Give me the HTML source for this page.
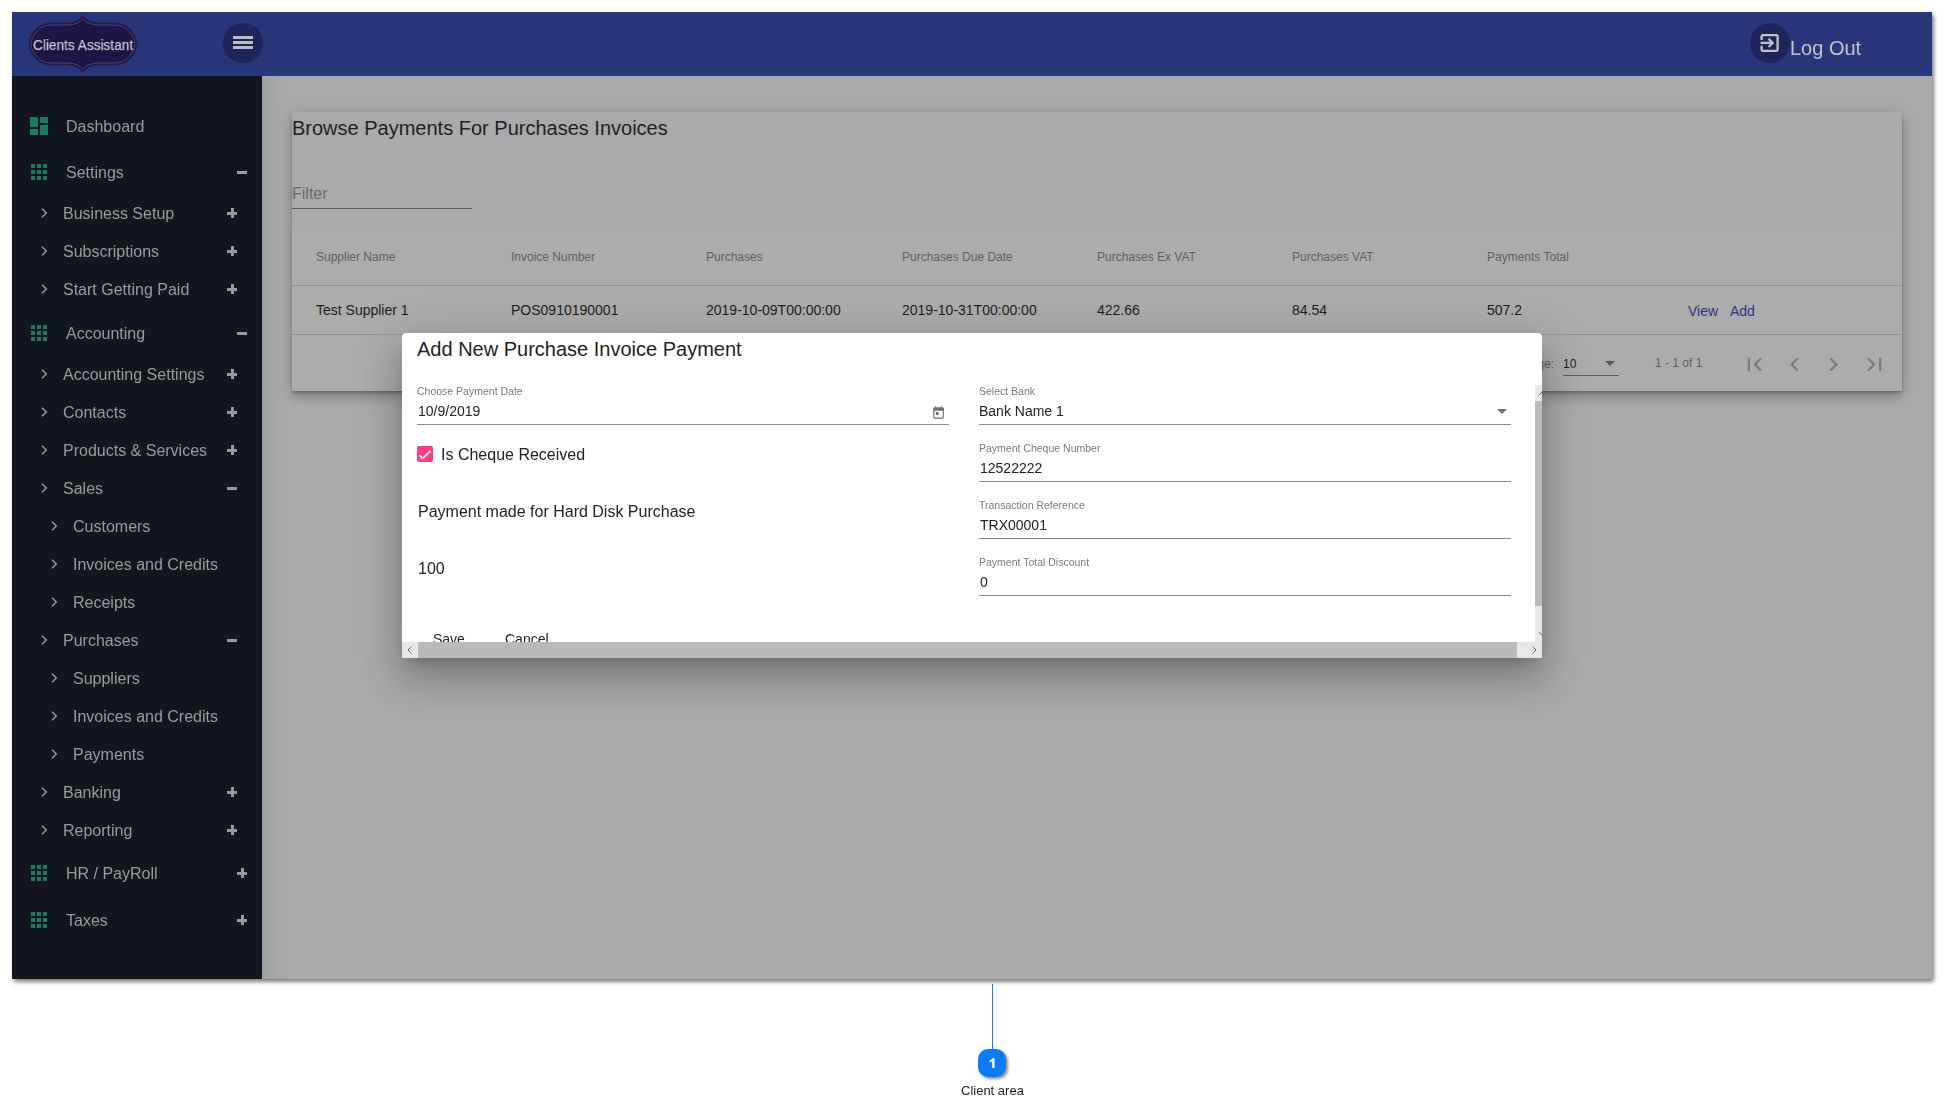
<!DOCTYPE html>
<html><head><meta charset="utf-8"><style>
*{margin:0;padding:0;box-sizing:border-box}
html,body{width:1948px;height:1114px;overflow:hidden;background:#fff}
body{position:relative;font-family:"Liberation Sans",sans-serif}
.t{position:absolute;white-space:nowrap;line-height:1}
.g{will-change:transform}
.r{position:absolute}
svg{position:absolute;overflow:visible}
</style></head><body>
<div class="r" style="left:12px;top:12px;width:1920px;height:967px;background:#a9aaac;box-shadow:2px 3px 4px rgba(0,0,0,.5);"></div>
<div class="r" style="left:12px;top:12px;width:1920px;height:64px;background:#2a367a;"></div>
<div class="r" style="left:12px;top:76px;width:250px;height:903px;background:#13161e;"></div>
<div class="r" style="left:262px;top:76px;width:24px;height:903px;background:linear-gradient(to right,rgba(0,0,0,.055),rgba(0,0,0,.03) 40%,rgba(0,0,0,0));"></div>
<svg style="left:28px;top:15px" width="110" height="58" viewBox="0 0 110 58">
<path d="M55 1 C60 6 64 8 72 8 L88 8 C100 8 109 20 109 29 C109 38 100 50 88 50 L72 50 C64 50 60 52 55 57 C50 52 46 50 38 50 L22 50 C10 50 1 38 1 29 C1 20 10 8 22 8 L38 8 C46 8 50 6 55 1 Z" fill="#1b1644" stroke="#2a2552" stroke-width="1.2"/>
<path d="M55 4 C59 8 64 10 72 10 L88 10 C98 10 107 21 107 29 C107 37 98 48 88 48 L72 48 C64 48 59 50 55 54 C51 50 46 48 38 48 L22 48 C12 48 3 37 3 29 C3 21 12 10 22 10 L38 10 C46 10 51 8 55 4 Z" fill="none" stroke="#4d4672" stroke-width="1"/>
</svg>
<div class="t g" style="left:33px;top:36.75px;font-size:15.5px;color:#c4c4c8;transform:scaleX(0.88);transform-origin:0 0;-webkit-text-stroke:0.25px #c4c4c8;">Clients Assistant</div>
<div class="r" style="left:223px;top:23px;width:40px;height:40px;background:#1f2559;border-radius:50%;"></div>
<div class="r" style="left:233px;top:36px;width:20px;height:3px;background:#bdbdbd;box-shadow:0 0 1px #0a1040;"></div>
<div class="r" style="left:233px;top:41px;width:20px;height:3px;background:#bdbdbd;box-shadow:0 0 1px #0a1040;"></div>
<div class="r" style="left:233px;top:46px;width:20px;height:3px;background:#bdbdbd;box-shadow:0 0 1px #0a1040;"></div>
<div class="r" style="left:1750px;top:23px;width:40px;height:40px;background:#1f2559;border-radius:50%;"></div>
<svg style="left:1755px;top:28px" width="30" height="30" viewBox="0 0 30 30">
<path d="M6.6 11.9 V8.6 Q6.6 7.1 7.6 7.1 H21.6 Q22.6 7.1 22.6 8.1 V21.8 Q22.6 22.8 21.6 22.8 H7.6 Q6.6 22.8 6.6 21.8 V17.8" fill="none" stroke="#c2c2bf" stroke-width="2.3"/>
<path d="M5.5 14.95 H17.2 M13.6 10.9 L17.7 14.95 L13.6 19" fill="none" stroke="#c2c2bf" stroke-width="2.2"/>
</svg>
<div class="t g" style="left:1790px;top:38.00px;font-size:20px;color:#c4c4c6;">Log Out</div>
<div class="r" style="left:30px;top:117px;width:8px;height:10px;background:#197a66;"></div>
<div class="r" style="left:40px;top:117px;width:8px;height:6px;background:#197a66;"></div>
<div class="r" style="left:30px;top:129px;width:8px;height:6px;background:#197a66;"></div>
<div class="r" style="left:40px;top:125px;width:8px;height:10px;background:#197a66;"></div>
<div class="t g" style="left:66px;top:118.50px;font-size:16px;color:#9b9b9b;">Dashboard</div>
<div class="r" style="left:31px;top:164px;width:4px;height:4px;background:#197a66;"></div>
<div class="r" style="left:37px;top:164px;width:4px;height:4px;background:#197a66;"></div>
<div class="r" style="left:43px;top:164px;width:4px;height:4px;background:#197a66;"></div>
<div class="r" style="left:31px;top:170px;width:4px;height:4px;background:#197a66;"></div>
<div class="r" style="left:37px;top:170px;width:4px;height:4px;background:#197a66;"></div>
<div class="r" style="left:43px;top:170px;width:4px;height:4px;background:#197a66;"></div>
<div class="r" style="left:31px;top:176px;width:4px;height:4px;background:#197a66;"></div>
<div class="r" style="left:37px;top:176px;width:4px;height:4px;background:#197a66;"></div>
<div class="r" style="left:43px;top:176px;width:4px;height:4px;background:#197a66;"></div>
<div class="t g" style="left:66px;top:164.50px;font-size:16px;color:#9b9b9b;">Settings</div>
<div class="r" style="left:237px;top:170.7px;width:10px;height:3px;background:#9b9b9b;"></div>
<div class="r" style="left:31px;top:325px;width:4px;height:4px;background:#197a66;"></div>
<div class="r" style="left:37px;top:325px;width:4px;height:4px;background:#197a66;"></div>
<div class="r" style="left:43px;top:325px;width:4px;height:4px;background:#197a66;"></div>
<div class="r" style="left:31px;top:331px;width:4px;height:4px;background:#197a66;"></div>
<div class="r" style="left:37px;top:331px;width:4px;height:4px;background:#197a66;"></div>
<div class="r" style="left:43px;top:331px;width:4px;height:4px;background:#197a66;"></div>
<div class="r" style="left:31px;top:337px;width:4px;height:4px;background:#197a66;"></div>
<div class="r" style="left:37px;top:337px;width:4px;height:4px;background:#197a66;"></div>
<div class="r" style="left:43px;top:337px;width:4px;height:4px;background:#197a66;"></div>
<div class="t g" style="left:66px;top:325.50px;font-size:16px;color:#9b9b9b;">Accounting</div>
<div class="r" style="left:237px;top:331.7px;width:10px;height:3px;background:#9b9b9b;"></div>
<div class="r" style="left:31px;top:865px;width:4px;height:4px;background:#197a66;"></div>
<div class="r" style="left:37px;top:865px;width:4px;height:4px;background:#197a66;"></div>
<div class="r" style="left:43px;top:865px;width:4px;height:4px;background:#197a66;"></div>
<div class="r" style="left:31px;top:871px;width:4px;height:4px;background:#197a66;"></div>
<div class="r" style="left:37px;top:871px;width:4px;height:4px;background:#197a66;"></div>
<div class="r" style="left:43px;top:871px;width:4px;height:4px;background:#197a66;"></div>
<div class="r" style="left:31px;top:877px;width:4px;height:4px;background:#197a66;"></div>
<div class="r" style="left:37px;top:877px;width:4px;height:4px;background:#197a66;"></div>
<div class="r" style="left:43px;top:877px;width:4px;height:4px;background:#197a66;"></div>
<div class="t g" style="left:66px;top:865.50px;font-size:16px;color:#9b9b9b;">HR / PayRoll</div>
<div class="r" style="left:237px;top:871.7px;width:10px;height:3px;background:#9b9b9b;"></div>
<div class="r" style="left:240.5px;top:868.2px;width:3px;height:10px;background:#9b9b9b;"></div>
<div class="r" style="left:31px;top:912px;width:4px;height:4px;background:#197a66;"></div>
<div class="r" style="left:37px;top:912px;width:4px;height:4px;background:#197a66;"></div>
<div class="r" style="left:43px;top:912px;width:4px;height:4px;background:#197a66;"></div>
<div class="r" style="left:31px;top:918px;width:4px;height:4px;background:#197a66;"></div>
<div class="r" style="left:37px;top:918px;width:4px;height:4px;background:#197a66;"></div>
<div class="r" style="left:43px;top:918px;width:4px;height:4px;background:#197a66;"></div>
<div class="r" style="left:31px;top:924px;width:4px;height:4px;background:#197a66;"></div>
<div class="r" style="left:37px;top:924px;width:4px;height:4px;background:#197a66;"></div>
<div class="r" style="left:43px;top:924px;width:4px;height:4px;background:#197a66;"></div>
<div class="t g" style="left:66px;top:912.50px;font-size:16px;color:#9b9b9b;">Taxes</div>
<div class="r" style="left:237px;top:918.7px;width:10px;height:3px;background:#9b9b9b;"></div>
<div class="r" style="left:240.5px;top:915.2px;width:3px;height:10px;background:#9b9b9b;"></div>
<svg style="left:41px;top:207.5px" width="7" height="10" viewBox="0 0 7 10"><path d="M1 0.8 L5.3 5 L1 9.2" fill="none" stroke="#9b9b9b" stroke-width="1.5"/></svg>
<div class="t g" style="left:63px;top:205.50px;font-size:16px;color:#9b9b9b;">Business Setup</div>
<div class="r" style="left:227px;top:211.7px;width:10px;height:3px;background:#9b9b9b;"></div>
<div class="r" style="left:230.5px;top:208.2px;width:3px;height:10px;background:#9b9b9b;"></div>
<svg style="left:41px;top:245.5px" width="7" height="10" viewBox="0 0 7 10"><path d="M1 0.8 L5.3 5 L1 9.2" fill="none" stroke="#9b9b9b" stroke-width="1.5"/></svg>
<div class="t g" style="left:63px;top:243.50px;font-size:16px;color:#9b9b9b;">Subscriptions</div>
<div class="r" style="left:227px;top:249.7px;width:10px;height:3px;background:#9b9b9b;"></div>
<div class="r" style="left:230.5px;top:246.2px;width:3px;height:10px;background:#9b9b9b;"></div>
<svg style="left:41px;top:283.5px" width="7" height="10" viewBox="0 0 7 10"><path d="M1 0.8 L5.3 5 L1 9.2" fill="none" stroke="#9b9b9b" stroke-width="1.5"/></svg>
<div class="t g" style="left:63px;top:281.50px;font-size:16px;color:#9b9b9b;">Start Getting Paid</div>
<div class="r" style="left:227px;top:287.7px;width:10px;height:3px;background:#9b9b9b;"></div>
<div class="r" style="left:230.5px;top:284.2px;width:3px;height:10px;background:#9b9b9b;"></div>
<svg style="left:41px;top:368.5px" width="7" height="10" viewBox="0 0 7 10"><path d="M1 0.8 L5.3 5 L1 9.2" fill="none" stroke="#9b9b9b" stroke-width="1.5"/></svg>
<div class="t g" style="left:63px;top:366.50px;font-size:16px;color:#9b9b9b;">Accounting Settings</div>
<div class="r" style="left:227px;top:372.7px;width:10px;height:3px;background:#9b9b9b;"></div>
<div class="r" style="left:230.5px;top:369.2px;width:3px;height:10px;background:#9b9b9b;"></div>
<svg style="left:41px;top:406.5px" width="7" height="10" viewBox="0 0 7 10"><path d="M1 0.8 L5.3 5 L1 9.2" fill="none" stroke="#9b9b9b" stroke-width="1.5"/></svg>
<div class="t g" style="left:63px;top:404.50px;font-size:16px;color:#9b9b9b;">Contacts</div>
<div class="r" style="left:227px;top:410.7px;width:10px;height:3px;background:#9b9b9b;"></div>
<div class="r" style="left:230.5px;top:407.2px;width:3px;height:10px;background:#9b9b9b;"></div>
<svg style="left:41px;top:444.5px" width="7" height="10" viewBox="0 0 7 10"><path d="M1 0.8 L5.3 5 L1 9.2" fill="none" stroke="#9b9b9b" stroke-width="1.5"/></svg>
<div class="t g" style="left:63px;top:442.50px;font-size:16px;color:#9b9b9b;">Products &amp; Services</div>
<div class="r" style="left:227px;top:448.7px;width:10px;height:3px;background:#9b9b9b;"></div>
<div class="r" style="left:230.5px;top:445.2px;width:3px;height:10px;background:#9b9b9b;"></div>
<svg style="left:41px;top:482.5px" width="7" height="10" viewBox="0 0 7 10"><path d="M1 0.8 L5.3 5 L1 9.2" fill="none" stroke="#9b9b9b" stroke-width="1.5"/></svg>
<div class="t g" style="left:63px;top:480.50px;font-size:16px;color:#9b9b9b;">Sales</div>
<div class="r" style="left:227px;top:486.7px;width:10px;height:3px;background:#9b9b9b;"></div>
<svg style="left:51px;top:520.5px" width="7" height="10" viewBox="0 0 7 10"><path d="M1 0.8 L5.3 5 L1 9.2" fill="none" stroke="#9b9b9b" stroke-width="1.5"/></svg>
<div class="t g" style="left:73px;top:518.50px;font-size:16px;color:#9b9b9b;">Customers</div>
<svg style="left:51px;top:558.5px" width="7" height="10" viewBox="0 0 7 10"><path d="M1 0.8 L5.3 5 L1 9.2" fill="none" stroke="#9b9b9b" stroke-width="1.5"/></svg>
<div class="t g" style="left:73px;top:556.50px;font-size:16px;color:#9b9b9b;">Invoices and Credits</div>
<svg style="left:51px;top:596.5px" width="7" height="10" viewBox="0 0 7 10"><path d="M1 0.8 L5.3 5 L1 9.2" fill="none" stroke="#9b9b9b" stroke-width="1.5"/></svg>
<div class="t g" style="left:73px;top:594.50px;font-size:16px;color:#9b9b9b;">Receipts</div>
<svg style="left:41px;top:634.5px" width="7" height="10" viewBox="0 0 7 10"><path d="M1 0.8 L5.3 5 L1 9.2" fill="none" stroke="#9b9b9b" stroke-width="1.5"/></svg>
<div class="t g" style="left:63px;top:632.50px;font-size:16px;color:#9b9b9b;">Purchases</div>
<div class="r" style="left:227px;top:638.7px;width:10px;height:3px;background:#9b9b9b;"></div>
<svg style="left:51px;top:672.5px" width="7" height="10" viewBox="0 0 7 10"><path d="M1 0.8 L5.3 5 L1 9.2" fill="none" stroke="#9b9b9b" stroke-width="1.5"/></svg>
<div class="t g" style="left:73px;top:670.50px;font-size:16px;color:#9b9b9b;">Suppliers</div>
<svg style="left:51px;top:710.5px" width="7" height="10" viewBox="0 0 7 10"><path d="M1 0.8 L5.3 5 L1 9.2" fill="none" stroke="#9b9b9b" stroke-width="1.5"/></svg>
<div class="t g" style="left:73px;top:708.50px;font-size:16px;color:#9b9b9b;">Invoices and Credits</div>
<svg style="left:51px;top:748.5px" width="7" height="10" viewBox="0 0 7 10"><path d="M1 0.8 L5.3 5 L1 9.2" fill="none" stroke="#9b9b9b" stroke-width="1.5"/></svg>
<div class="t g" style="left:73px;top:746.50px;font-size:16px;color:#9b9b9b;">Payments</div>
<svg style="left:41px;top:786.5px" width="7" height="10" viewBox="0 0 7 10"><path d="M1 0.8 L5.3 5 L1 9.2" fill="none" stroke="#9b9b9b" stroke-width="1.5"/></svg>
<div class="t g" style="left:63px;top:784.50px;font-size:16px;color:#9b9b9b;">Banking</div>
<div class="r" style="left:227px;top:790.7px;width:10px;height:3px;background:#9b9b9b;"></div>
<div class="r" style="left:230.5px;top:787.2px;width:3px;height:10px;background:#9b9b9b;"></div>
<svg style="left:41px;top:824.5px" width="7" height="10" viewBox="0 0 7 10"><path d="M1 0.8 L5.3 5 L1 9.2" fill="none" stroke="#9b9b9b" stroke-width="1.5"/></svg>
<div class="t g" style="left:63px;top:822.50px;font-size:16px;color:#9b9b9b;">Reporting</div>
<div class="r" style="left:227px;top:828.7px;width:10px;height:3px;background:#9b9b9b;"></div>
<div class="r" style="left:230.5px;top:825.2px;width:3px;height:10px;background:#9b9b9b;"></div>
<div class="r" style="left:292px;top:112px;width:1610px;height:279px;background:#a9aaac;box-shadow:0 2px 2px 0 rgba(0,0,0,.22),0 6px 10px 0 rgba(0,0,0,.16),0 2px 16px 1px rgba(0,0,0,.12);"></div>
<div class="r" style="left:292px;top:229px;width:1610px;height:162px;background:#acacac;"></div>
<div class="t" style="left:292px;top:118.00px;font-size:20px;color:#1e1e1e;">Browse Payments For Purchases Invoices</div>
<div class="t" style="left:292px;top:185.50px;font-size:16px;color:#6a6a6b;">Filter</div>
<div class="r" style="left:292px;top:208px;width:180px;height:1px;background:#5d5d5e;"></div>
<div class="t" style="left:316px;top:251.00px;font-size:12px;color:#5f5f60;">Supplier Name</div>
<div class="t" style="left:316px;top:303.00px;font-size:14px;color:#1c1c1c;">Test Supplier 1</div>
<div class="t" style="left:511px;top:251.00px;font-size:12px;color:#5f5f60;">Invoice Number</div>
<div class="t" style="left:511px;top:303.00px;font-size:14px;color:#1c1c1c;">POS0910190001</div>
<div class="t" style="left:706px;top:251.00px;font-size:12px;color:#5f5f60;">Purchases</div>
<div class="t" style="left:706px;top:303.00px;font-size:14px;color:#1c1c1c;">2019-10-09T00:00:00</div>
<div class="t" style="left:902px;top:251.00px;font-size:12px;color:#5f5f60;">Purchases Due Date</div>
<div class="t" style="left:902px;top:303.00px;font-size:14px;color:#1c1c1c;">2019-10-31T00:00:00</div>
<div class="t" style="left:1097px;top:251.00px;font-size:12px;color:#5f5f60;">Purchases Ex VAT</div>
<div class="t" style="left:1097px;top:303.00px;font-size:14px;color:#1c1c1c;">422.66</div>
<div class="t" style="left:1292px;top:251.00px;font-size:12px;color:#5f5f60;">Purchases VAT</div>
<div class="t" style="left:1292px;top:303.00px;font-size:14px;color:#1c1c1c;">84.54</div>
<div class="t" style="left:1487px;top:251.00px;font-size:12px;color:#5f5f60;">Payments Total</div>
<div class="t" style="left:1487px;top:303.00px;font-size:14px;color:#1c1c1c;">507.2</div>
<div class="r" style="left:292px;top:285px;width:1610px;height:1px;background:#959596;"></div>
<div class="r" style="left:292px;top:334px;width:1610px;height:1px;background:#959596;"></div>
<div class="t" style="left:1688px;top:304.00px;font-size:14px;color:#2b357f;">View</div>
<div class="t" style="left:1730px;top:304.00px;font-size:14px;color:#2b357f;">Add</div>
<div class="t" style="left:1470px;top:358.00px;font-size:12px;color:#5f5f60;">Rows per page:</div>
<div class="t" style="left:1563px;top:358.00px;font-size:12px;color:#1c1c1c;">10</div>
<svg style="left:1605px;top:361px" width="10" height="5" viewBox="0 0 10 5"><path d="M0 0 L10 0 L5 5 Z" fill="#555"/></svg>
<div class="r" style="left:1563px;top:375px;width:56px;height:1px;background:#5d5d5e;"></div>
<div class="t" style="left:1655px;top:357.00px;font-size:12px;color:#5f5f60;">1 - 1 of 1</div>
<svg style="left:1740.5px;top:350.75px" width="27" height="27" viewBox="0 0 24 24"><path fill="#7b7b7b" d="M18.41 16.59L13.82 12l4.59-4.59L17 6l-6 6 6 6zM6 6h2v12H6z"/></svg>
<svg style="left:1780.8px;top:350.75px" width="27" height="27" viewBox="0 0 24 24"><path fill="#7b7b7b" d="M15.41 7.41L14 6l-6 6 6 6 1.41-1.41L10.83 12z"/></svg>
<svg style="left:1820.3px;top:350.75px" width="27" height="27" viewBox="0 0 24 24"><path fill="#7b7b7b" d="M10 6L8.59 7.41 13.17 12l-4.58 4.59L10 18l6-6z"/></svg>
<svg style="left:1860.8px;top:350.75px" width="27" height="27" viewBox="0 0 24 24"><path fill="#7b7b7b" d="M5.59 7.41L10.18 12l-4.59 4.59L7 18l6-6-6-6zM16 6h2v12h-2z"/></svg>
<div class="r" style="left:402px;top:333px;width:1140px;height:325px;background:#fff;border-radius:4px 4px 0 0;overflow:hidden;box-shadow:0 11px 15px -7px rgba(0,0,0,.2),0 24px 38px 3px rgba(0,0,0,.14),0 9px 46px 8px rgba(0,0,0,.12);"></div>
<div class="t" style="left:417px;top:339.00px;font-size:20px;color:#1e1e1e;">Add New Purchase Invoice Payment</div>
<div class="t g" style="left:417px;top:385.75px;font-size:10.5px;color:#7a7a7a;">Choose Payment Date</div>
<div class="t g" style="left:418px;top:404.00px;font-size:14px;color:#222222;">10/9/2019</div>
<div class="r" style="left:417px;top:424px;width:532px;height:1px;background:#8c8c8c;"></div>
<svg style="left:925px;top:398.8px" width="30" height="30" viewBox="0 0 30 30"><rect x="8.8" y="9" width="9.5" height="10.1" rx="1.2" fill="none" stroke="#737373" stroke-width="1.2"/><rect x="8.2" y="8.4" width="10.7" height="3.3" rx="1" fill="#737373"/><rect x="10" y="7.3" width="1.1" height="2" fill="#737373"/><rect x="15.9" y="7.3" width="1.1" height="2" fill="#737373"/><rect x="10.9" y="13.2" width="2.7" height="2.7" fill="#5a5a5a"/></svg>
<div class="r" style="left:417px;top:446px;width:16px;height:16px;background:#ff3e80;border-radius:2px;"></div>
<svg style="left:417px;top:446px" width="16" height="16" viewBox="0 0 16 16"><path d="M2.4 9.1 L5.8 12.4 L13.4 4.9" fill="none" stroke="#fff" stroke-width="1.5"/></svg>
<div class="t g" style="left:441px;top:446.50px;font-size:16px;color:#222222;">Is Cheque Received</div>
<div class="t g" style="left:418px;top:503.50px;font-size:16px;color:#222222;">Payment made for Hard Disk Purchase</div>
<div class="t g" style="left:418px;top:560.50px;font-size:16px;color:#222222;">100</div>
<div class="t g" style="left:979px;top:385.75px;font-size:10.5px;color:#7a7a7a;">Select Bank</div>
<div class="t g" style="left:979px;top:404.00px;font-size:14px;color:#222222;">Bank Name 1</div>
<div class="r" style="left:979px;top:424px;width:532px;height:1px;background:#8c8c8c;"></div>
<div class="t g" style="left:979px;top:442.75px;font-size:10.5px;color:#7a7a7a;">Payment Cheque Number</div>
<div class="t g" style="left:980px;top:461.00px;font-size:14px;color:#222222;">12522222</div>
<div class="r" style="left:979px;top:481px;width:532px;height:1px;background:#8c8c8c;"></div>
<div class="t g" style="left:979px;top:499.75px;font-size:10.5px;color:#7a7a7a;">Transaction Reference</div>
<div class="t g" style="left:980px;top:518.00px;font-size:14px;color:#222222;">TRX00001</div>
<div class="r" style="left:979px;top:538px;width:532px;height:1px;background:#8c8c8c;"></div>
<div class="t g" style="left:979px;top:556.75px;font-size:10.5px;color:#7a7a7a;">Payment Total Discount</div>
<div class="t g" style="left:980px;top:575.00px;font-size:14px;color:#222222;">0</div>
<div class="r" style="left:979px;top:595px;width:532px;height:1px;background:#8c8c8c;"></div>
<svg style="left:1497px;top:409px" width="10" height="5" viewBox="0 0 10 5"><path d="M0 0 L10 0 L5 5 Z" fill="#6e6e6e"/></svg>
<div class="r" style="left:402px;top:620px;width:1140px;height:22px;overflow:hidden"><div class="t g" style="left:31px;top:12.00px;font-size:14px;color:#222222;">Save</div>
<div class="t g" style="left:103px;top:12.00px;font-size:14px;color:#222222;">Cancel</div>
</div>
<div class="r" style="left:1535px;top:385px;width:7px;height:257px;background:#e8e8e8;"></div>
<div class="r" style="left:1535px;top:401px;width:7px;height:205px;background:#bababa;"></div>
<svg style="left:1535px;top:385px" width="7" height="257" viewBox="0 0 7 257"><path d="M3.8 10.2 L7.5 6.5" stroke="#606060" stroke-width="1" fill="none"/><path d="M3.8 247 L7.5 250.7" stroke="#606060" stroke-width="1" fill="none"/></svg>
<div class="r" style="left:402px;top:642px;width:1140px;height:16px;background:#e8e8e8;"></div>
<div class="r" style="left:418px;top:642px;width:1099px;height:16px;background:#bababa;"></div>
<svg style="left:405px;top:645px" width="10" height="10" viewBox="0 0 10 10"><path d="M6.5 1.5 L3 5 L6.5 8.5" fill="none" stroke="#707070" stroke-width="1"/></svg>
<svg style="left:1529px;top:645px" width="10" height="10" viewBox="0 0 10 10"><path d="M3.5 1.5 L7 5 L3.5 8.5" fill="none" stroke="#707070" stroke-width="1"/></svg>
<div class="r" style="left:992px;top:984px;width:1px;height:65px;background:#1a7cf0;"></div>
<div class="r" style="left:978px;top:1049px;width:28px;height:28px;background:#0a7cf6;border-radius:10px;box-shadow:2px 2px 3px rgba(0,0,0,.45);"></div>
<svg style="left:978px;top:1049px" width="28" height="28" viewBox="0 0 28 28"><path d="M14.2 9.2 H16.6 V19 H14.2 V12.3 Q13.2 13.2 11.6 13.6 V11.5 Q13.4 10.9 14.2 9.2 Z" fill="#fff"/></svg>
<div class="t g" style="left:961px;top:1084.00px;font-size:13px;color:#1f1f1f;">Client area</div>
</body></html>
